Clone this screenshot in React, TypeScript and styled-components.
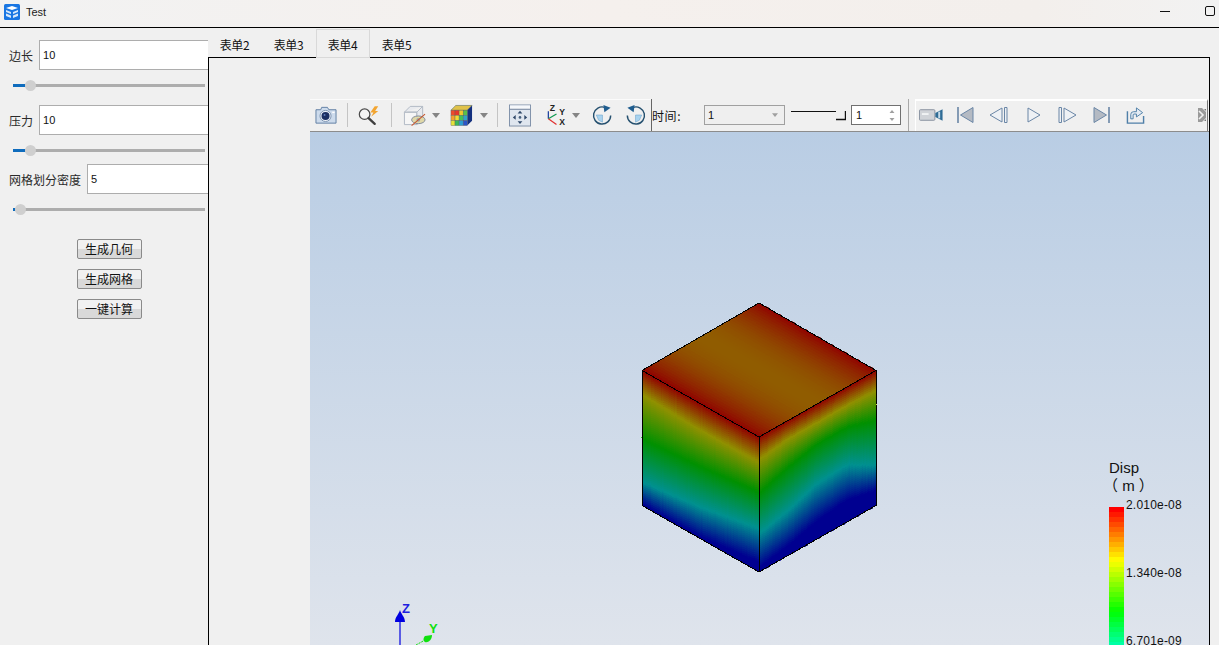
import React from 'react'
import styled, { createGlobalStyle } from 'styled-components'

const GlobalStyle = createGlobalStyle`
  html, body { margin: 0; padding: 0; height: 645px; overflow: hidden; background: #f0f0f0; }
  * { box-sizing: border-box; }
  body { font-family: "Liberation Sans", "Noto Sans CJK SC", sans-serif; font-size: 12px; color: #111; }
`

const Page = styled.div`
  display: flex;
  flex-direction: column;
  width: 1219px;
  height: 645px;
  overflow: hidden;
`

const TitleBar = styled.div`
  display: flex;
  align-items: center;
  flex: none;
  height: 28px;
  padding: 0 4px 3px 4px;
  border-bottom: 1px solid #000;
  background: linear-gradient(90deg, #f2f2f2 0%, #f5f0ed 50%, #f3efec 85%, #f2f2f2 100%);
`

const TitleText = styled.span`
  margin-left: 6px;
  font-size: 11px;
  color: #222;
`

const WindowButtons = styled.div`
  display: flex;
  align-items: center;
  margin-left: auto;
`

const MinimizeButton = styled.div`
  width: 10px;
  height: 1px;
  margin-top: -1px;
  background: #111;
`

const MaximizeButton = styled.div`
  width: 10px;
  height: 10px;
  margin-left: 35px;
  margin-top: -2px;
  border: 1px solid #111;
  border-radius: 2px;
`

const Body = styled.div`
  display: flex;
  flex: 1;
  min-height: 0;
`

const Sidebar = styled.aside`
  flex: none;
  width: 208px;
  overflow: hidden;
`

const SidebarInner = styled.div`
  display: flex;
  flex-direction: column;
  width: 219px;
  padding-top: 12px;
`

const FieldRow = styled.div`
  display: flex;
  align-items: center;
  gap: 6px;
  padding-left: 9px;
  height: 30px;
`

const FieldLabel = styled.label`
  flex: none;
  font-family: "Noto Sans CJK SC", sans-serif;
  font-size: 12px;
  color: #2a2a2a;
`

const FieldInput = styled.input`
  flex: 1;
  min-width: 0;
  height: 30px;
  padding: 0 3px;
  border: 1px solid #adadad;
  border-radius: 0;
  outline: none;
  background: #fff;
  font-family: "Liberation Sans", sans-serif;
  font-size: 11px;
  color: #111;
`

const SliderWrap = styled.div<{ $after: number }>`
  position: relative;
  width: 192px;
  height: 11px;
  margin: 10px 0 ${p => p.$after}px 13px;
`

const SliderGroove = styled.div`
  position: absolute;
  left: 0;
  right: 0;
  top: 4px;
  height: 3px;
  background: #adadad;
`

const SliderFill = styled.div`
  position: absolute;
  left: 0;
  top: 4px;
  height: 3px;
  background: #0f6cbd;
`

const SliderKnob = styled.div`
  position: absolute;
  top: 0;
  width: 11px;
  height: 11px;
  border-radius: 50%;
  background: #cfcfcf;
`

const ButtonStack = styled.div`
  display: flex;
  flex-direction: column;
  align-items: center;
  gap: 10px;
  margin-top: 24px;
`

const ActionButton = styled.button`
  width: 65px;
  height: 20px;
  padding: 0 1px 0 0;
  border: 1px solid #8a8a8a;
  border-radius: 2px;
  background: linear-gradient(180deg, #f1f1f1 0%, #f1f1f1 52%, #d9d9d9 52%, #d9d9d9 100%);
  font-family: "Noto Sans CJK SC", sans-serif;
  font-size: 12px;
  line-height: 16px;
  color: #111;
`

const MainColumn = styled.main`
  display: flex;
  flex-direction: column;
  flex: 1;
  min-width: 0;
  margin-right: 9px;
`

const TabBar = styled.div`
  position: relative;
  z-index: 1;
  display: flex;
  flex: none;
  height: 30px;
  margin-bottom: -1px;
`

const Tab = styled.div<{ $active?: boolean }>`
  display: flex;
  align-items: center;
  justify-content: center;
  width: 54px;
  height: 29px;
  margin-top: 1px;
  padding: 1px 1px 0 0;
  border: ${p => (p.$active ? '1px solid #d9d9d9' : 'none')};
  background: ${p => (p.$active ? '#f0f0f0' : 'transparent')};
  font-family: "Noto Sans CJK SC", sans-serif;
  font-size: 12px;
  letter-spacing: -0.4px;
  color: #111;
`

const TabPane = styled.section`
  display: flex;
  flex: 1;
  flex-direction: column;
  min-height: 0;
  padding: 41px 0 0 101px;
  border: 1px solid #000;
  border-bottom: none;
`

const Viewer = styled.div`
  display: flex;
  flex: 1;
  flex-direction: column;
  min-height: 0;
`

const Toolbar = styled.div`
  display: flex;
  flex: none;
  height: 33px;
  border-bottom: 1px solid #8c8c8c;
  background: #f0f0f0;
`

const IconGroup = styled.div`
  display: flex;
  align-items: center;
  flex: none;
  width: 341px;
  padding: 0 0 1px 5px;
  border-top: 1px solid #fbfbfb;
`

const Slot = styled.div<{ $w: number; $ml?: number }>`
  display: flex;
  align-items: center;
  justify-content: center;
  flex: none;
  width: ${p => p.$w}px;
  margin-left: ${p => p.$ml ?? 0}px;
`

const Separator = styled.div<{ $ml: number }>`
  flex: none;
  width: 1px;
  height: 24px;
  margin-left: ${p => p.$ml}px;
  background: #c4c4c4;
`

const TimeGroup = styled.div`
  display: flex;
  align-items: center;
  flex: none;
  width: 258px;
  border-left: 1px solid #666;
  border-right: 1px solid #a8a8a8;
`

const TimeLabel = styled.span`
  flex: none;
  width: 52px;
  font-family: "Noto Sans CJK SC", sans-serif;
  font-size: 12px;
  letter-spacing: 0.6px;
  color: #111;
`

const ComboBox = styled.div`
  display: flex;
  align-items: center;
  justify-content: space-between;
  flex: none;
  width: 81px;
  height: 20px;
  padding: 0 6px 0 3px;
  border: 1px solid #a0a0a0;
  background: #efefef;
  font-size: 11px;
`

const SpinBox = styled.div`
  display: flex;
  align-items: center;
  justify-content: space-between;
  flex: none;
  width: 50px;
  height: 20px;
  margin-left: 5px;
  padding: 0 5px 0 4px;
  border: 1px solid #707070;
  background: #fff;
  font-size: 11px;
`

const PlaybackGroup = styled.div`
  display: flex;
  align-items: center;
  flex: 1;
  margin: 0 1px 0 6px;
  padding: 0 0 2px 3px;
  border-top: 2px solid #fff;
  border-left: 1px solid #fff;
  border-right: 1px solid #777;
`

const GripSlot = styled.div`
  display: flex;
  margin-left: auto;
  padding-right: 1px;
`

const Viewport = styled.div`
  position: relative;
  flex: 1;
  min-height: 0;
  overflow: hidden;
  background: linear-gradient(180deg, #b9cde4 0%, #dfe4ec 100%);
`

const Scene = styled.svg`
  position: absolute;
  left: 0;
  top: 0;
`

const Legend = styled.div`
  position: absolute;
  left: 799px;
  top: 327px;
  width: 90px;
`

const LegendTitle = styled.div`
  font-size: 15px;
  line-height: 17px;
  color: #111;
`

const LegendUnit = styled.div`
  margin-left: -6px;
  padding-top: 1px;
  font-family: "Liberation Sans", "Noto Sans CJK SC", sans-serif;
  font-size: 15px;
  line-height: 17px;
  color: #111;
`

const LegendBody = styled.div`
  display: flex;
  margin-top: 13px;
`

const ColorBar = styled.div`
  flex: none;
  width: 15px;
  height: 204px;
  background: ${() => colorBarStops()};
`

const LegendTicks = styled.div`
  display: flex;
  flex-direction: column;
  gap: 53px;
  margin: -9px 0 0 2px;
`

const LegendTick = styled.span`
  font-size: 12px;
  line-height: 15px;
  letter-spacing: 0.2px;
  color: #111;
`

// ---- colour maps ----

const mix = (a: number[], b: number[], t: number) => a.map((v, i) => Math.round(v + (b[i] - v) * t))

function ramp(stops: number[][], s: number) {
  const c = Math.max(0, Math.min(0.9999, s)) * (stops.length - 1)
  const i = Math.floor(c)
  return mix(stops[i], stops[i + 1], c - i)
}

const DIM = [[0, 0, 144], [0, 144, 144], [0, 144, 0], [144, 144, 0], [144, 0, 0]]
const BRIGHT = [[0, 0, 255], [0, 255, 255], [0, 255, 0], [255, 255, 0], [255, 0, 0]]

function colorBarStops() {
  const band = 5
  const parts: string[] = []
  for (let y = 0; y < 204; y += band) {
    const [r, g, b] = ramp(BRIGHT, 1 - y / 204)
    parts.push(`rgb(${r},${g},${b}) ${y}px ${y + band}px`)
  }
  return `linear-gradient(180deg, ${parts.join(',')})`
}

// ---- cube mesh ----

type Pt = [number, number]
const T: Pt = [759, 303]
const L: Pt = [642, 370.5]
const R: Pt = [876, 370.5]
const C: Pt = [759, 437]
const H = 135

const LEVELS = [1, 0.75, 0.5, 0.25, 0]
const LEFT_KNOTS = [
  [0, 0.18, 0.51, 0.83, 0.99],
  [0, 0.2, 0.47, 0.77, 0.99],
  [0, 0.19, 0.41, 0.68, 0.93],
]
const RIGHT_KNOTS = [
  [0, 0.17, 0.42, 0.72, 0.97],
  [0, 0.14, 0.35, 0.67, 0.93],
  [0, 0.14, 0.3, 0.59, 0.87],
  [0, 0.14, 0.3, 0.58, 0.84],
  [0, 0.15, 0.37, 0.7, 0.89],
]

function sampleFace(table: number[][], u: number, v: number) {
  const c = Math.min(0.9999, u) * (table.length - 1)
  const i = Math.floor(c)
  const knots = table[i].map((k, n) => k + (table[i + 1][n] - k) * (c - i))
  for (let n = 0; n < knots.length - 1; n++) {
    if (v <= knots[n + 1]) {
      const t = (v - knots[n]) / (knots[n + 1] - knots[n])
      return LEVELS[n] + (LEVELS[n + 1] - LEVELS[n]) * t
    }
  }
  return 0
}

type Cell = { d: string; fill: string }

function buildFace(
  at: (u: number, v: number) => Pt,
  value: (u: number, v: number) => number,
  cols: number,
  rows: number,
) {
  const cells: Cell[] = []
  for (let i = 0; i < cols; i++) {
    for (let j = 0; j < rows; j++) {
      const u0 = i / cols, u1 = (i + 1) / cols, v0 = j / rows, v1 = (j + 1) / rows
      const pts = [at(u0, v0), at(u1, v0), at(u1, v1), at(u0, v1)]
      const [r, g, b] = ramp(DIM, value((u0 + u1) / 2, (v0 + v1) / 2))
      cells.push({
        d: 'M' + pts.map(p => `${p[0].toFixed(1)} ${p[1].toFixed(1)}`).join('L') + 'Z',
        fill: `rgb(${r},${g},${b})`,
      })
    }
  }
  return cells
}

const CUBE_CELLS: Cell[] = [
  ...buildFace(
    (u, v) => [T[0] + v * (L[0] - T[0]) + u * (R[0] - T[0]), T[1] + v * (L[1] - T[1]) + u * (R[1] - T[1])],
    (_u, v) => 1 - 0.16 * Math.pow(Math.sin(Math.PI * v), 0.8),
    36, 48,
  ),
  ...buildFace(
    (u, v) => [L[0] + u * (C[0] - L[0]), L[1] + u * (C[1] - L[1]) + v * H],
    (u, v) => sampleFace(LEFT_KNOTS, u, v),
    36, 68,
  ),
  ...buildFace(
    (u, v) => [C[0] + u * (R[0] - C[0]), C[1] + u * (R[1] - C[1]) + v * H],
    (u, v) => sampleFace(RIGHT_KNOTS, u, v),
    36, 68,
  ),
]

const CubeModel = () => (
  <g shapeRendering="crispEdges">
    {CUBE_CELLS.map((c, i) => (
      <path key={i} d={c.d} fill={c.fill} stroke={c.fill} strokeWidth={0.7} />
    ))}
    <path
      d="M759 303L876 370.5V505.5L759 572L642 505.5V370.5ZM642 370.5L759 437L876 370.5M759 437V572"
      fill="none"
      stroke="#000"
      strokeWidth={1}
    />
    <path d="M642 437h-1" stroke="#2fd02f" />
    <path d="M876 404h1" stroke="#d8d84a" />
  </g>
)

const AxisTriad = () => (
  <g>
    <path d="M400 620V645" stroke="#0000e0" strokeWidth={1.2} />
    <path d="M400 610C401 614 405 617 405 622H395C395 617 399 614 400 610Z" fill="#0000e0" />
    <text x="402" y="613" fontFamily="Liberation Sans" fontWeight="700" fontSize="13" fill="#2020e0">Z</text>
    <path d="M416 645L425 640" stroke="#10e010" strokeWidth={1} strokeDasharray="2 1" />
    <path d="M432 635C432 640 428 643 425 642C423 641 423 638 425 636Z" fill="#10e010" />
    <text x="429" y="633" fontFamily="Liberation Sans" fontWeight="700" fontSize="13" fill="#10e010">Y</text>
  </g>
)

// ---- toolbar icons ----

const CameraIcon = () => (
  <svg width="23" height="20" viewBox="0 0 23 20">
    <path d="M1 4.5H6L7 2H13L14.5 4.5H22V18.5H1Z" fill="#cddbec" stroke="#5f7ea3" strokeLinejoin="round" />
    <circle cx="11" cy="11" r="5.8" fill="#f2f5fa" stroke="#7c93b0" />
    <circle cx="11" cy="11" r="4.2" fill="#1c2f62" />
    <circle cx="10" cy="10" r="1" fill="#5f7cb8" />
    <rect x="18" y="6.5" width="2.5" height="1.5" fill="#fff" />
  </svg>
)

const SearchBoltIcon = () => (
  <svg width="25" height="23" viewBox="0 0 25 23">
    <circle cx="7.5" cy="10" r="6" fill="#f4f4f4" stroke="#4a4a4a" strokeWidth="1.4" />
    <path d="M12 14.5L19 21" stroke="#3f3f3f" strokeWidth="2.6" strokeLinecap="round" />
    <path d="M19 1L14 8H17.5L15 13L23 6.5H19.5L23 1Z" fill="#f2a532" />
  </svg>
)

const HiddenCubeIcon = () => (
  <svg width="24" height="23" viewBox="0 0 24 23">
    <path d="M1.5 8V21H14.5V8Z" fill="#f6f6f6" stroke="#b0b8c3" />
    <path d="M1.5 8L7.5 2H20.5V15L14.5 21V8L20.5 2M14.5 8H1.5" fill="#e8eaee" stroke="#b0b8c3" />
    <ellipse cx="16" cy="16" rx="7" ry="4" fill="#e0d8a8" stroke="#7f8a9a" />
    <circle cx="16" cy="16" r="2" fill="#99a3ad" />
    <path d="M9 22L23 10" stroke="#c8552c" strokeWidth="1.1" />
  </svg>
)

const CELL_COLORS = ['#ef4a2a', '#e8362a', '#f2c72e', '#58c04a', '#f5a02c', '#efdc35', '#44c05a', '#2ea6c8', '#e4e23a', '#39b85a', '#2d9fd2', '#2a55c8']

const ColorCubeIcon = () => (
  <svg width="24" height="23" viewBox="0 0 24 23">
    <path d="M1 6L6 1H23L18 6Z" fill="#e0c24a" stroke="#5a6a55" strokeWidth="0.6" />
    <path d="M18 6L23 1V17L18 22Z" fill="#14307f" />
    {CELL_COLORS.map((c, i) => (
      <rect key={i} x={1 + (i % 4) * 4.25} y={6 + Math.floor(i / 4) * 5.33} width={4.25} height={5.33} fill={c} stroke="#5c5c5c" strokeWidth="0.4" />
    ))}
  </svg>
)

const DropArrow = ({ small }: { small?: boolean }) => (
  <svg width={small ? 6 : 8} height={small ? 4 : 5} viewBox="0 0 8 5">
    <path d="M0 0H8L4 5Z" fill={small ? '#a0a0a0' : '#858585'} />
  </svg>
)

const FitViewIcon = () => (
  <svg width="23" height="23" viewBox="0 0 23 23">
    <rect x="0.5" y="0.5" width="22" height="22" fill="#dfe6ef" stroke="#7e8fa8" />
    <rect x="1" y="1" width="21" height="3.5" fill="#f6f8fb" />
    <path d="M1 5H22" stroke="#6f7f99" />
    <circle cx="11.5" cy="13.5" r="1.4" fill="#46607f" />
    <path d="M11.5 6.5L9 9.5H14ZM11.5 20.5L9 17.5H14ZM4 13.5L7 11V16ZM19 13.5L16 11V16Z" fill="#2f4869" />
  </svg>
)

const AxesIcon = () => (
  <svg width="23" height="24" viewBox="0 0 23 24">
    <path d="M3.5 16V8" stroke="#1b3f9c" strokeWidth="1.3" />
    <path d="M3.5 16L12 11" stroke="#109a52" strokeWidth="1.3" />
    <path d="M3.5 16L12 22" stroke="#e03030" strokeWidth="1.3" />
    <text x="5" y="8" fontFamily="Liberation Sans" fontSize="9" fontWeight="700" fill="#222">Z</text>
    <text x="15" y="12" fontFamily="Liberation Sans" fontSize="9" fontWeight="700" fill="#222">Y</text>
    <text x="15" y="22" fontFamily="Liberation Sans" fontSize="9" fontWeight="700" fill="#222">X</text>
  </svg>
)

const RotateIcon = ({ mirror }: { mirror?: boolean }) => (
  <svg width="21" height="22" viewBox="0 0 21 22" style={mirror ? { transform: 'scaleX(-1)' } : undefined}>
    <path d="M4.5 11H11V18.5L7 16.5Z" fill="#a9d3ef" stroke="#6ea5cc" strokeWidth="0.6" />
    <path d="M13.5 3A9 9 0 1 0 19.6 11.5" fill="none" stroke="#25506f" strokeWidth="1.5" />
    <path d="M12 0.5L19.5 3.5L13 8Z" fill="#1f5d8f" />
  </svg>
)

const TimeSliderIcon = () => (
  <svg width="56" height="16" viewBox="0 0 56 16">
    <path d="M1 4.5H46" stroke="#111" />
    <path d="M46 12.5H55.5V4" fill="none" stroke="#111" strokeWidth="1.4" />
  </svg>
)

const SpinArrows = () => (
  <svg width="6" height="11" viewBox="0 0 6 11">
    <path d="M3 0L5.5 3H0.5ZM3 11L0.5 8H5.5Z" fill="#a0a0a0" />
  </svg>
)

const VideoIcon = () => (
  <svg width="26" height="16" viewBox="0 0 26 16">
    <rect x="0.5" y="2.5" width="16" height="11" rx="1" fill="#d0d3d8" stroke="#8892a0" />
    <rect x="3" y="6" width="7" height="2" fill="#f0f2f4" />
    <path d="M17 6L24.5 2V14L17 10Z" fill="#2f6c96" />
    <rect x="20" y="4.5" width="2" height="7" fill="#c6dbea" />
  </svg>
)

const STROKE = '#6a86a6'
const DARK_FILL = '#b4bac3'
const LIGHT_FILL = '#eef1f5'

const FirstIcon = () => (
  <svg width="17" height="18" viewBox="0 0 17 18">
    <path d="M1 1V17" stroke={STROKE} strokeWidth="1.6" />
    <path d="M16 1.5V16.5L3.5 9Z" fill={DARK_FILL} stroke={STROKE} strokeLinejoin="round" />
  </svg>
)

const PrevIcon = () => (
  <svg width="19" height="18" viewBox="0 0 19 18">
    <path d="M13 2V16L1 9Z" fill={LIGHT_FILL} stroke={STROKE} strokeLinejoin="round" />
    <path d="M15.5 1.5H18V16.5H15.5Z" fill={LIGHT_FILL} stroke={STROKE} />
  </svg>
)

const PlayIcon = () => (
  <svg width="14" height="16" viewBox="0 0 14 16">
    <path d="M1 1V15L13 8Z" fill={LIGHT_FILL} stroke={STROKE} strokeLinejoin="round" />
  </svg>
)

const NextIcon = () => (
  <svg width="19" height="18" viewBox="0 0 19 18">
    <path d="M1 1.5H3.5V16.5H1Z" fill={LIGHT_FILL} stroke={STROKE} />
    <path d="M6 2V16L18 9Z" fill={LIGHT_FILL} stroke={STROKE} strokeLinejoin="round" />
  </svg>
)

const LastIcon = () => (
  <svg width="17" height="18" viewBox="0 0 17 18">
    <path d="M1 1.5V16.5L13.5 9Z" fill={DARK_FILL} stroke={STROKE} strokeLinejoin="round" />
    <path d="M16 1V17" stroke={STROKE} strokeWidth="1.6" />
  </svg>
)

const ExportIcon = () => (
  <svg width="20" height="19" viewBox="0 0 20 19">
    <path d="M1.5 5V17.5H18.5V10" fill="none" stroke="#4f7fa8" strokeWidth="1.5" />
    <path d="M5 13V8.5A3 3 0 0 1 8 5.5H11V1.5L17.5 6.5L11 11V8H8.5A1 1 0 0 0 7.5 9V13Z" fill="#e4ecf4" stroke="#4f7fa8" strokeLinejoin="round" />
  </svg>
)

const GripIcon = () => (
  <svg width="8" height="14" viewBox="0 0 8 14">
    <path d="M0 0H4L8 4V10L4 14H0Z" fill="#9a9a9a" />
    <path d="M1 3L5 7L1 11" fill="none" stroke="#f0f0f0" strokeWidth="1.6" />
    <path d="M6 1H8V3ZM6 13H8V11Z" fill="#777" />
  </svg>
)

const AppIcon = () => (
  <svg width="16" height="16" viewBox="0 0 16 16">
    <rect width="16" height="16" rx="1.5" fill="#1976e3" />
    <path d="M2 4L8 2L14 4L8 6Z" fill="#fff" />
    <path d="M2 6L7 8V10L2 8ZM2 9.5L7 11.5V14L2 12ZM9 8L14 6V8L9 10ZM9 11.5L14 9.5V12L9 14Z" fill="#d7e9fb" />
  </svg>
)

// ---- page parts ----

const ParamSlider = ({ fill, after }: { fill: number; after: number }) => (
  <SliderWrap $after={after}>
    <SliderGroove />
    <SliderFill style={{ width: fill }} />
    <SliderKnob style={{ left: fill }} />
  </SliderWrap>
)

const Field = ({ label, value }: { label: string; value: string }) => (
  <FieldRow>
    <FieldLabel>{label}</FieldLabel>
    <FieldInput value={value} readOnly />
  </FieldRow>
)

export default function App() {
  return (
    <Page>
      <GlobalStyle />
      <TitleBar>
        <AppIcon />
        <TitleText>Test</TitleText>
        <WindowButtons>
          <MinimizeButton />
          <MaximizeButton />
        </WindowButtons>
      </TitleBar>
      <Body>
        <Sidebar>
          <SidebarInner>
            <Field label="边长" value="10" />
            <ParamSlider fill={12} after={14} />
            <Field label="压力" value="10" />
            <ParamSlider fill={12} after={8} />
            <Field label="网格划分密度" value="5" />
            <ParamSlider fill={2} after={0} />
            <ButtonStack>
              <ActionButton>生成几何</ActionButton>
              <ActionButton>生成网格</ActionButton>
              <ActionButton>一键计算</ActionButton>
            </ButtonStack>
          </SidebarInner>
        </Sidebar>
        <MainColumn>
          <TabBar>
            <Tab>表单2</Tab>
            <Tab>表单3</Tab>
            <Tab $active>表单4</Tab>
            <Tab>表单5</Tab>
          </TabBar>
          <TabPane>
            <Viewer>
              <Toolbar>
                <IconGroup>
                  <Slot $w={22}><CameraIcon /></Slot>
                  <Separator $ml={10} />
                  <Slot $w={22} $ml={10}><SearchBoltIcon /></Slot>
                  <Separator $ml={11} />
                  <Slot $w={23} $ml={11}><HiddenCubeIcon /></Slot>
                  <Slot $w={8} $ml={6}><DropArrow /></Slot>
                  <Slot $w={23} $ml={10}><ColorCubeIcon /></Slot>
                  <Slot $w={8} $ml={7}><DropArrow /></Slot>
                  <Separator $ml={9} />
                  <Slot $w={22} $ml={11}><FitViewIcon /></Slot>
                  <Slot $w={22} $ml={14}><AxesIcon /></Slot>
                  <Slot $w={8} $ml={5}><DropArrow /></Slot>
                  <Slot $w={20} $ml={12}><RotateIcon /></Slot>
                  <Slot $w={20} $ml={14}><RotateIcon mirror /></Slot>
                </IconGroup>
                <TimeGroup>
                  <TimeLabel>时间:</TimeLabel>
                  <ComboBox>
                    1
                    <DropArrow small />
                  </ComboBox>
                  <Slot $w={56} $ml={5}><TimeSliderIcon /></Slot>
                  <SpinBox>
                    1
                    <SpinArrows />
                  </SpinBox>
                </TimeGroup>
                <PlaybackGroup>
                  <Slot $w={25}><VideoIcon /></Slot>
                  <Slot $w={17} $ml={13}><FirstIcon /></Slot>
                  <Slot $w={19} $ml={15}><PrevIcon /></Slot>
                  <Slot $w={14} $ml={19}><PlayIcon /></Slot>
                  <Slot $w={19} $ml={17}><NextIcon /></Slot>
                  <Slot $w={17} $ml={16}><LastIcon /></Slot>
                  <Slot $w={19} $ml={16}><ExportIcon /></Slot>
                  <GripSlot><GripIcon /></GripSlot>
                </PlaybackGroup>
              </Toolbar>
              <Viewport>
                <Scene width="899" height="513" viewBox="310 132 899 513">
                  <CubeModel />
                  <AxisTriad />
                </Scene>
                <Legend>
                  <LegendTitle>Disp</LegendTitle>
                  <LegendUnit>（ m ）</LegendUnit>
                  <LegendBody>
                    <ColorBar />
                    <LegendTicks>
                      <LegendTick>2.010e-08</LegendTick>
                      <LegendTick>1.340e-08</LegendTick>
                      <LegendTick>6.701e-09</LegendTick>
                    </LegendTicks>
                  </LegendBody>
                </Legend>
              </Viewport>
            </Viewer>
          </TabPane>
        </MainColumn>
      </Body>
    </Page>
  )
}
